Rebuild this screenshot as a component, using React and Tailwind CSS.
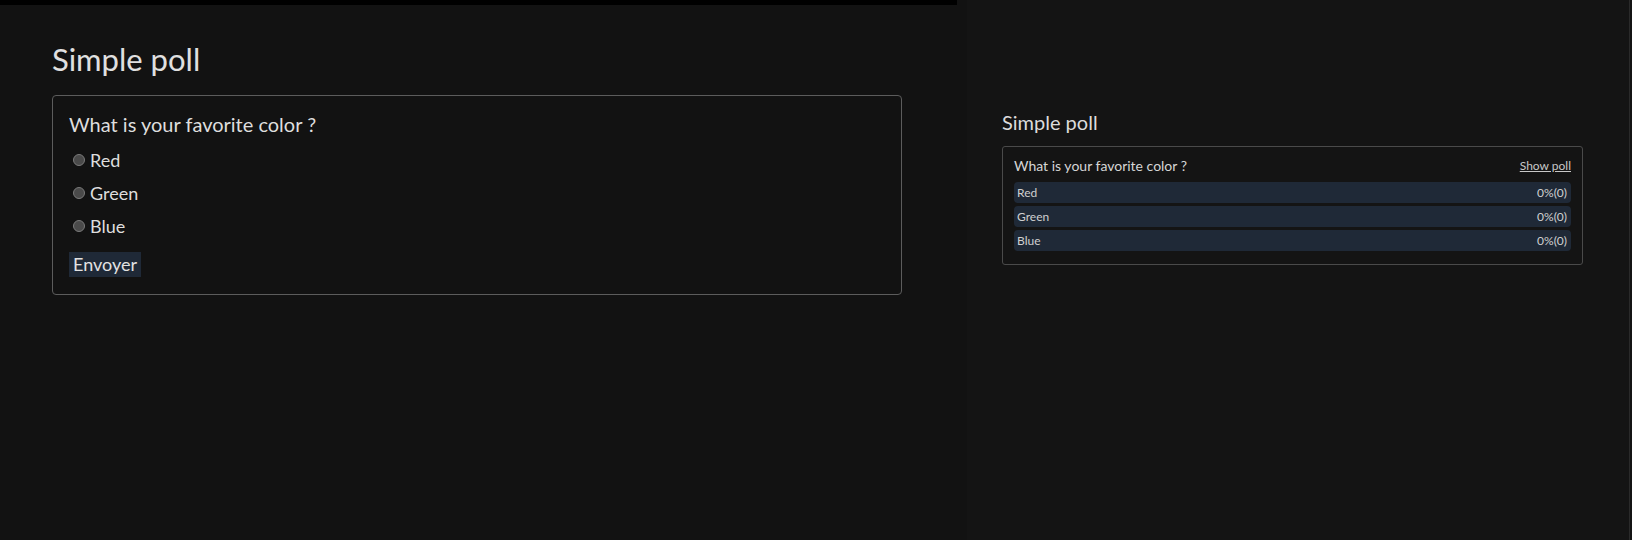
import { useState } from "react";

const OPTIONS = ["Red", "Green", "Blue"];

function PollForm() {
  const [choice, setChoice] = useState("");
  return (
    <div className="rounded-[4px] border border-[#5c5c5c] px-4 pt-[14px] pb-[17px]">
      <p className="text-[20px] leading-[28px] text-[#dedede]">What is your favorite color ?</p>
      <div className="mt-[8px] flex flex-col gap-[5px]">
        {OPTIONS.map((opt) => (
          <label key={opt} className="flex h-[28px] items-center gap-[5px] pl-[4px] text-[18px] text-[#dedede]">
            <input
              type="radio"
              name="color"
              value={opt}
              checked={choice === opt}
              onChange={() => setChoice(opt)}
              className="size-[12px] appearance-none rounded-full border border-[#7a7a7a] bg-[#4a4a4a] checked:bg-[#9ca3af]"
            />
            {opt}
          </label>
        ))}
      </div>
      <button
        type="button"
        className="mt-[12px] h-[25px] bg-[#1f2937] px-[4px] text-[18px] leading-[25px] text-[#e2e2e2]"
      >
        Envoyer
      </button>
    </div>
  );
}

function PollResults() {
  return (
    <div className="rounded-[3px] border border-[#4a4a4a] px-[11px] pt-[9px] pb-[13px]">
      <div className="flex items-center justify-between">
        <p className="text-[14px] leading-[20px] text-[#d6d6d6]">What is your favorite color ?</p>
        <a href="#" className="text-[12px] text-[#c8c8c8] underline">
          Show poll
        </a>
      </div>
      <div className="mt-[6px] flex flex-col gap-[3px]">
        {OPTIONS.map((opt) => (
          <div
            key={opt}
            className="flex h-[21px] items-center justify-between rounded-[4px] bg-[#1f2937] pl-[3px] pr-[4px] text-[12px] text-[#d0d0d0]"
          >
            <span>{opt}</span>
            <span>0%(0)</span>
          </div>
        ))}
      </div>
    </div>
  );
}

export default function App() {
  return (
    <div className="flex h-[540px] w-full font-['Lato','Noto_Sans',sans-serif]">
      <div className="flex w-[957px] shrink-0 flex-col bg-[#121212]">
        <div className="h-[5px] bg-black" />
        <div className="px-[52px] pr-[55px]">
          <h1 className="mt-[36px] text-[31px] leading-[36px] text-[#e0e0e0]">Simple poll</h1>
          <div className="mt-[18px]">
            <PollForm />
          </div>
        </div>
      </div>
      <div className="flex flex-1 border-l-[10px] border-[#121212] bg-[#141414]">
        <div className="flex-1 pl-[35px] pr-[46px]">
          <h2 className="mt-[108px] text-[20px] leading-[28px] text-[#dcdcdc]">Simple poll</h2>
          <div className="mt-[10px]">
            <PollResults />
          </div>
        </div>
        <div className="w-[3px] border-l border-[#2a2a2a]" />
      </div>
    </div>
  );
}
